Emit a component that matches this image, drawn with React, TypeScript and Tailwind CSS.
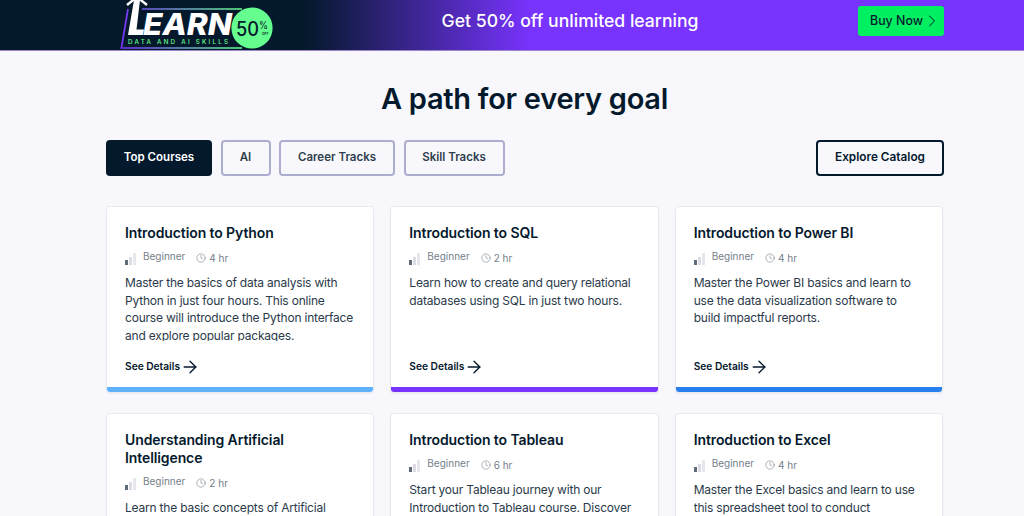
import React from "react";
import { ArrowRight, ChevronRight, Clock } from "lucide-react";

const font = "[font-family:Inter,'Liberation_Sans',sans-serif]";

function Logo() {
  return (
    <svg width="160" height="50" viewBox="0 0 160 50" className="shrink-0 ml-[119px]" aria-label="Learn">
      <defs>
        <linearGradient id="frame" gradientUnits="userSpaceOnUse" x1="2" x2="123" y1="0" y2="0">
          <stop offset="0" stopColor="#7933ff" />
          <stop offset="1" stopColor="#65ff8f" />
        </linearGradient>
      </defs>
      <path d="M9 9 L2.4 48 H123" fill="none" stroke="url(#frame)" strokeWidth="1.7" />
      <path d="M23 9 H123" fill="none" stroke="url(#frame)" strokeWidth="1.7" />
      <path d="M15 0 L21 0 L17.5 29.5 L25 29.5 L24 35 L9 35 Z" fill="#fff" />
      <path d="M8 5 L18 -3 L28 5" fill="none" stroke="#fff" strokeWidth="2.4" />
      <text x="24" y="35" fontFamily="Inter, sans-serif" fontWeight="800" fontStyle="italic" fontSize="30" fill="#fff" textLength="89" lengthAdjust="spacingAndGlyphs">EARN</text>
      <text x="9" y="44" fontFamily="Inter, sans-serif" fontWeight="500" fontSize="6.2" fill="#65ff8f" textLength="100">DATA AND AI SKILLS</text>
      <circle cx="133" cy="28" r="20.6" fill="#65ff8f" />
      <text x="117" y="36" fontFamily="Inter, sans-serif" fontWeight="500" fontSize="19.5" fill="#05192d" textLength="23" lengthAdjust="spacingAndGlyphs">50</text>
      <text x="140" y="29" fontFamily="Inter, sans-serif" fontWeight="400" fontSize="11" fill="#05192d" textLength="9" lengthAdjust="spacingAndGlyphs">%</text>
      <text x="143" y="34.5" fontFamily="Inter, sans-serif" fontWeight="600" fontSize="3.4" fill="#05192d">OFF</text>
    </svg>
  );
}

function Banner() {
  return (
    <div className="h-[51px] shrink-0 flex items-start border-b border-[#9a86c9] bg-[linear-gradient(90deg,#05192d_0%,#05192d_30%,#7933ff_52%,#7933ff_100%)]">
      <Logo />
      <div className="ml-[162px] mt-[9px] w-[258px] text-center whitespace-nowrap text-white text-[17.6px] leading-6 font-medium">Get 50% off unlimited learning</div>
      <button className="ml-[159px] mt-[6px] h-[30px] w-[86px] pl-[12px] rounded-[3px] bg-[#03ef62] text-[#05192d] text-[12.4px] font-medium flex items-center justify-start">
        Buy Now
        <ChevronRight size={20} strokeWidth={1.2} className="-ml-[1px]" />
      </button>
    </div>
  );
}

function Tab({ label, active, w }: { label: string; active?: boolean; w: string }) {
  return (
    <button className={`h-[36px] ${w} rounded-[4px] border-2 text-[11.5px] font-semibold ${active ? "bg-[#05192d] border-[#05192d] text-white" : "border-[#adadcf] text-[#303e4d]"}`}>
      {label}
    </button>
  );
}

function Bars() {
  return (
    <span className="flex items-end gap-[1px] w-[12px] h-[12px] shrink-0 mt-[2px]">
      <span className="w-[3px] h-[5px] bg-[#5f6b78]" />
      <span className="w-[3px] h-[8px] bg-[#dcdce6]" />
      <span className="w-[3px] h-[12px] bg-[#e6e6ee]" />
    </span>
  );
}

type C = { title: string; hours: string; desc: string; color?: string };

function Card({ title, hours, desc, color }: C) {
  return (
    <div className={`${color ? "h-[187px]" : "h-[200px]"} rounded-[4px] bg-white border border-[#e8e8ef] overflow-hidden flex flex-col shadow-[0_1px_2px_rgba(5,25,45,0.05)]`}>
      <div className="flex-1 min-h-0 px-[18px] pt-[17px] flex flex-col">
        <h3 className="text-[14px] leading-[18px] font-semibold text-[#05192d] tracking-[-0.1px]">{title}</h3>
        <div className="mt-[8px] flex items-center h-[16px] text-[10px] text-[#75808a]">
          <Bars />
          <span className="ml-[6px] -mt-[3px]">Beginner</span>
          <Clock size={10} strokeWidth={1.4} className="ml-[11px]" />
          <span className="ml-[3px] mt-px">{hours}</span>
        </div>
        <p className="mt-[8px] h-[67px] shrink-0 overflow-hidden text-[12px] leading-[17.7px] tracking-[-0.2px] text-[#2b3a4a]">{desc}</p>
        {color && (
          <div className="mt-[18px] flex items-center text-[10.2px] font-semibold text-[#05192d]">
            See Details
            <ArrowRight size={20} strokeWidth={1.6} className="-my-[3px]" />
          </div>
        )}
      </div>
      {color && <div className={`h-[5px] shrink-0 ${color}`} />}
    </div>
  );
}

const row1: C[] = [
  { title: "Introduction to Python", hours: "4 hr", color: "bg-[#5eb1ff]", desc: "Master the basics of data analysis with Python in just four hours. This online course will introduce the Python interface and explore popular packages." },
  { title: "Introduction to SQL", hours: "2 hr", color: "bg-[#7933ff]", desc: "Learn how to create and query relational databases using SQL in just two hours." },
  { title: "Introduction to Power BI", hours: "4 hr", color: "bg-[#2a7ff0]", desc: "Master the Power BI basics and learn to use the data visualization software to build impactful reports." },
];
const row2: C[] = [
  { title: "Understanding Artificial Intelligence", hours: "2 hr", desc: "Learn the basic concepts of Artificial Intelligence, such as machine learning and deep learning." },
  { title: "Introduction to Tableau", hours: "6 hr", desc: "Start your Tableau journey with our Introduction to Tableau course. Discover how to analyze data." },
  { title: "Introduction to Excel", hours: "4 hr", desc: "Master the Excel basics and learn to use this spreadsheet tool to conduct meaningful analyses." },
];

export default function App() {
  return (
    <div className={`h-screen overflow-hidden flex flex-col bg-[#f7f7fc] ${font}`}>
      <Banner />
      <main className="pl-[106px] pr-[81px] w-[1024px]">
        <h2 className="mt-[30px] text-center text-[29px] leading-[36px] font-semibold text-[#05192d] tracking-[-0.27px]">A path for every goal</h2>
        <div className="mt-[23px] flex items-center gap-[8.5px]">
          <Tab label="Top Courses" active w="w-[106px]" />
          <Tab label="AI" w="w-[50px]" />
          <Tab label="Career Tracks" w="w-[116px]" />
          <Tab label="Skill Tracks" w="w-[101px]" />
          <button className="ml-auto -mr-[1px] h-[36px] w-[128px] rounded-[4px] border-2 border-[#05192d] text-[11.8px] font-semibold text-[#05192d]">Explore Catalog</button>
        </div>
        <div className="mt-[30px] grid grid-cols-3 gap-x-[16px] gap-y-[20px]">
          {[...row1, ...row2].map((c) => (
            <Card key={c.title} {...c} />
          ))}
        </div>
      </main>
    </div>
  );
}
